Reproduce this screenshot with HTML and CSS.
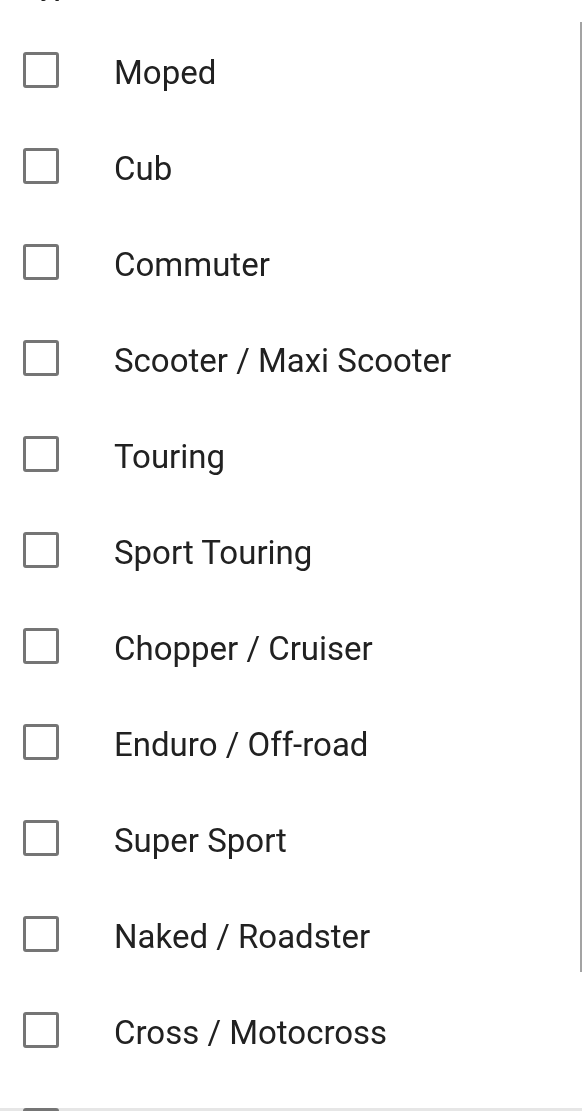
FILE: index.html
```html
<!DOCTYPE html>
<html lang="en">
<head>
  <meta charset="UTF-8">
  <title>Type</title>
  <link rel="stylesheet" href="styles.css">
</head>
<body>

  <h2 class="section-title">Type</h2>

  <!-- Lista de tipos -->
  <ul class="type-list">
    <li class="type-row"><span class="box"></span><span class="label">Moped</span></li>
    <li class="type-row"><span class="box"></span><span class="label">Cub</span></li>
    <li class="type-row"><span class="box"></span><span class="label">Commuter</span></li>
    <li class="type-row"><span class="box"></span><span class="label">Scooter / Maxi Scooter</span></li>
    <li class="type-row"><span class="box"></span><span class="label">Touring</span></li>
    <li class="type-row"><span class="box"></span><span class="label">Sport Touring</span></li>
    <li class="type-row"><span class="box"></span><span class="label">Chopper / Cruiser</span></li>
    <li class="type-row"><span class="box"></span><span class="label">Enduro / Off-road</span></li>
    <li class="type-row"><span class="box"></span><span class="label">Super Sport</span></li>
    <li class="type-row"><span class="box"></span><span class="label">Naked / Roadster</span></li>
    <li class="type-row"><span class="box"></span><span class="label">Cross / Motocross</span></li>
    <li class="type-row"><span class="box"></span></li>
  </ul>

  <div class="scrollbar"></div>
  <div class="bottom-edge"></div>

</body>
</html>
```

FILE: styles.css
```css
body {
  margin: 0;
  font-family: Roboto, "Liberation Sans", sans-serif;
  background-color: #ffffff;
  color: #212121;
  overflow: hidden;
}

.section-title {
  margin: -28px 0 2px 24px;
  height: 28px;
  font-size: 28px;
  line-height: 28px;
  font-weight: 500;
  color: #212121;
}

.type-list {
  list-style: none;
  margin: 0;
  padding: 20px 0 0 0;
}

.type-row {
  display: flex;
  align-items: center;
  height: 96px;
}

.box {
  width: 36px;
  height: 36px;
  margin-left: 23px;
  border: 3.5px solid #757575;
  border-radius: 3px;
  box-sizing: border-box;
  flex-shrink: 0;
}

.label {
  margin: 4px 0 0 55px;
  font-size: 33px;
  color: #212121;
  white-space: nowrap;
}

.scrollbar {
  position: fixed;
  top: 22px;
  right: 0;
  width: 2px;
  height: 950px;
  background-color: #a3a3a3;
}

.bottom-edge {
  position: fixed;
  left: 0;
  right: 0;
  bottom: 0;
  height: 3px;
  background-color: #e6e6e6;
  z-index: -1;
}
```
